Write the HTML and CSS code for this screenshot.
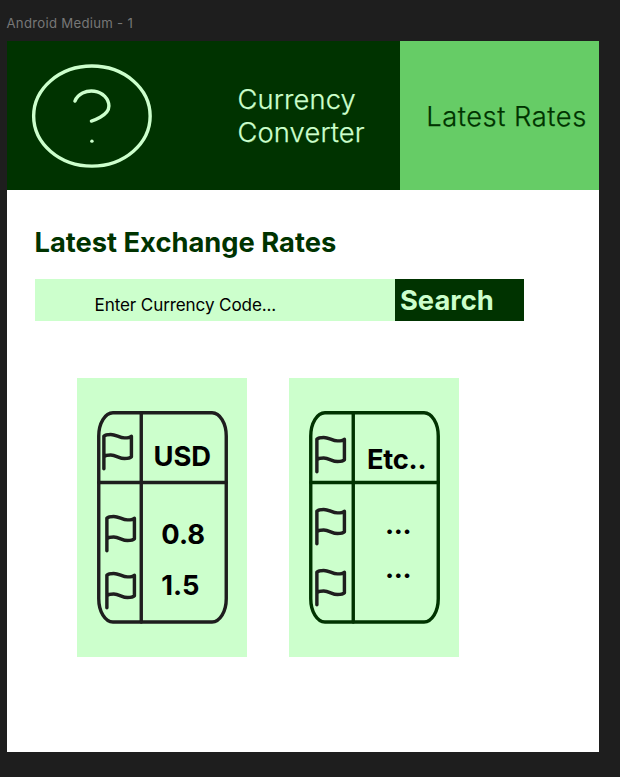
FILE: index.html
```html
<!DOCTYPE html>
<html lang="en">
<head>
<meta charset="utf-8">
<title>Currency Converter</title>
<link rel="stylesheet" href="styles.css">
</head>
<body>
<svg class="defs" aria-hidden="true">
  <symbol id="flag" viewBox="0 0 24 24">
    <path d="M4 15s1-1 4-1 5 2 8 2 4-1 4-1V3s-1 1-4 1-5-2-8-2-4 1-4 1zM4 22v-7"/>
  </symbol>
</svg>
<div class="frame-label">Android Medium - 1</div>
<main class="frame">
  <header class="header">
    <svg class="logo" viewBox="0 0 24 24" preserveAspectRatio="none">
      <circle cx="12" cy="12" r="10"/>
      <path d="M9.09 9a3 3 0 0 1 5.83 1c0 2-3 3-3 3"/>
      <path d="M12 17h.01"/>
    </svg>
    <div class="brand">Currency<br>Converter</div>
    <nav class="tab">Latest Rates</nav>
  </header>
  <h1 class="title">Latest Exchange Rates</h1>
  <div class="search">
    <div class="field">Enter Currency Code...</div>
    <div class="button">Search</div>
  </div>
  <div class="cards">
    <section class="card usd">
      <div class="table">
        <svg class="outline" viewBox="0 0 131 213"><rect x="1.75" y="1.75" width="127.5" height="209.3" rx="14.2" ry="23.3"/><path d="M1.75 71.5h127.5M44.25 1.75v209.3"/></svg>
        <div class="flags">
          <svg class="flag"><use href="#flag"/></svg>
          <svg class="flag"><use href="#flag"/></svg>
          <svg class="flag"><use href="#flag"/></svg>
        </div>
        <div class="values"><b>USD</b><b>0.8</b><b>1.5</b></div>
      </div>
    </section>
    <section class="card etc">
      <div class="table">
        <svg class="outline" viewBox="0 0 131 213"><rect x="1.75" y="1.75" width="127.5" height="209.3" rx="14.2" ry="23.3"/><path d="M1.75 71.5h127.5M44.25 1.75v209.3"/></svg>
        <div class="flags">
          <svg class="flag"><use href="#flag"/></svg>
          <svg class="flag"><use href="#flag"/></svg>
          <svg class="flag"><use href="#flag"/></svg>
        </div>
        <div class="values"><b>Etc..</b><b>...</b><b>...</b></div>
      </div>
    </section>
  </div>
</main>
</body>
</html>
```
FILE: styles.css
```css
* { box-sizing: border-box; }
body {
  margin: 0;
  height: 777px;
  overflow: hidden;
  background: #1e1e1e;
  font: 27.3px/33px Inter, "Liberation Sans", sans-serif;
}
svg { display: block; fill: none; stroke-linecap: round; stroke-linejoin: round; }
.defs { position: absolute; width: 0; height: 0; }
.frame-label {
  height: 41.3px;
  padding: 15px 0 0 6.5px;
  font-size: 13.2px;
  letter-spacing: 0.27px;
  line-height: 17px;
  color: #777;
}
.frame {
  width: 592.8px;
  height: 711.2px;
  margin-left: 6.5px;
  background: #fff;
}
.header {
  display: flex;
  height: 149px;
  background: #003300;
  color: #ccffcc;
  font-weight: 300;
  -webkit-text-stroke: 0.25px currentColor;
}
.logo {
  width: 139.8px;
  height: 120.2px;
  margin: 14.4px 0 0 15.9px;
  stroke: #ccffcc;
  stroke-width: 3.4px;
}
.logo * { vector-effect: non-scaling-stroke; }
.brand { width: 162.3px; margin: 41.7px 0 0 75.3px; letter-spacing: 0.15px; }
.tab {
  flex: 1;
  padding: 58.7px 0 0 26.4px;
  background: #66cc66;
  color: #003300;
  letter-spacing: 0.55px;
  white-space: nowrap;
}
.title {
  margin: 35.7px 0 0 28px;
  font-size: 27.3px;
  line-height: 33px;
  font-weight: 700;
  color: #003300;
}
.search { display: flex; width: 489.5px; height: 41.7px; margin: 20px 0 0 28px; }
.field {
  width: 360.5px;
  padding: 15px 0 0 60px;
  background: #ccffcc;
  font-size: 17.1px;
  letter-spacing: -0.12px;
  line-height: 21px;
}
.button { flex: 1; padding: 5.2px 0 0 5px; background: #003300; color: #ccffcc; font-weight: 700; }
.cards { display: flex; gap: 42.3px; margin: 57.5px 0 0 70.5px; }
.card { width: 170px; height: 279px; padding: 33.3px 0 0 19.3px; background: #ccffcc; }
.table { position: relative; display: flex; width: 131px; height: 213px; }
.outline { position: absolute; inset: 0; width: 131px; height: 213px; stroke: #1e1e1e; stroke-width: 3.4px; }
.usd .outline { left: 0.4px; }
.etc .outline { stroke: #003300; }
.flags { position: relative; width: 44px; }
.flag { width: 41.3px; height: 41.3px; margin-left: 4px; stroke: #1e1e1e; stroke-width: 2px; }
.flag:nth-child(1) { margin-top: 19.6px; margin-left: 1px; }
.flag:nth-child(2) { margin-top: 40.7px; }
.flag:nth-child(3) { margin-top: 15.4px; }
.etc .flag:nth-child(1) { margin-top: 23px; margin-left: 1.5px; }
.etc .flag:nth-child(2) { margin-top: 30.5px; margin-left: 1.5px; }
.etc .flag:nth-child(3) { margin-top: 19.7px; margin-left: 1.5px; }
.values { position: relative; display: flex; flex-direction: column; padding: 28.3px 0 0 13.2px; }
.values b { font-weight: 700; }
.values b:nth-child(2) { margin: 45px 0 0 7.8px; }
.values b:nth-child(3) { margin: 18px 0 0 7.8px; }
.etc .values { padding: 31.7px 0 0 14.3px; }
.etc .values b:first-child { letter-spacing: -0.25px; }
.etc .values b:nth-child(2) { margin: 32px 0 0 18px; letter-spacing: -0.3px; }
.etc .values b:nth-child(3) { margin: 11px 0 0 18px; letter-spacing: -0.3px; }
```
